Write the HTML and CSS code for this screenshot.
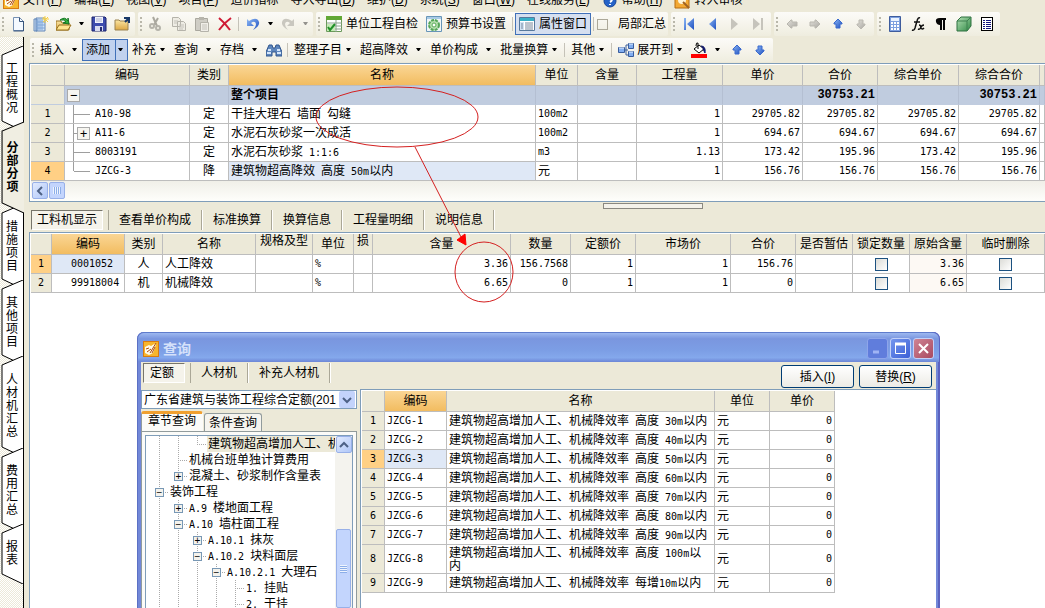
FILE: index.html
```html
<!DOCTYPE html>
<html lang="zh-CN">
<head>
<meta charset="utf-8">
<title>工程计价</title>
<link rel="stylesheet" href="styles.css">
</head>
<body>
<svg class="defs" aria-hidden="true">
  <defs>
    <linearGradient id="blue" x1="0" y1="0" x2="1" y2="1"><stop offset="0" stop-color="#8db8f5"/><stop offset="1" stop-color="#1e50c0"/></linearGradient>
    <linearGradient id="gray" x1="0" y1="0" x2="1" y2="1"><stop offset="0" stop-color="#e2e0da"/><stop offset="1" stop-color="#aaa8a2"/></linearGradient>
    <linearGradient id="green" x1="0" y1="0" x2="1" y2="1"><stop offset="0" stop-color="#b5e0b5"/><stop offset="1" stop-color="#2f8a45"/></linearGradient>
    <linearGradient id="gold" x1="0" y1="0" x2="0" y2="1"><stop offset="0" stop-color="#fbe6a4"/><stop offset="1" stop-color="#dca744"/></linearGradient>
  </defs>
  <symbol id="logo" viewBox="0 0 16 16"><rect width="16" height="16" fill="#d77b12"/><rect x="1" y="1" width="14" height="14" fill="#f7b52c"/><path d="M2 6l4-2 2 1 5-3-1 5-2 5-4 2-4-2z" fill="#fffbe8"/><path d="M3 8l3-1M4 11l4-3M7 12l6-10M9 12l3-6" stroke="#b04a08" fill="none"/></symbol>
  <symbol id="new" viewBox="0 0 16 16"><path d="M3.500 1.500h6l4 4v9h-10z" fill="#f4f9ff" stroke="#7590b4"/><path d="M9.500 1.500v4h4M13.500 5v10h-10" fill="none" stroke="#38557c"/></symbol>
  <symbol id="book" viewBox="0 0 16 16"><path d="M1 3h3v12H1zM3 2h9v13H3z" fill="#cfe2f8" stroke="#6588b8"/><path d="M5 3v11M7 3v11M9 3v11M3 6h9M3 9h9M3 12h9" stroke="#7ea6d8"/><path d="M12 0v7M9 3h7M10 1l5 5M15 1l-5 5" stroke="#f8d040"/></symbol>
  <symbol id="open" viewBox="0 0 16 16"><path d="M0 14V5h5l1 2h7v7z" fill="url(#gold)" stroke="#98711f"/><path d="M0 14l3-5h12l-3 5z" fill="#ffe58e" stroke="#98711f"/><path d="M4 4q5-4 8 1V2l1 6-6-1 3-1q-2-3-6-2" fill="#2fae39" stroke="#147522"/></symbol>
  <symbol id="save" viewBox="0 0 16 16"><path d="M1 1h13l1 1v13H1z" fill="#3d4cad" stroke="#1b236c"/><path d="M4 1h8v6H4z" fill="#f1f3fb"/><path d="M5 3h6M5 5h6" stroke="#aab0d0"/><path d="M4 10h8v5H4z" fill="#d8dcf0"/><path d="M9 11h2v4H9z" fill="#242b70"/></symbol>
  <symbol id="folder" viewBox="0 0 16 16"><path d="M1 14V4h4l1 1h8v9z" fill="url(#gold)" stroke="#9a8250"/><path d="M10 2h5v5M15 2l-4 4" stroke="#183868" stroke-width="2" fill="none"/></symbol>
  <symbol id="cut" viewBox="0 0 16 16"><path d="M5 1l4 9M10 2L6 9" stroke="#aaa89f" stroke-width="2"/><g fill="none" stroke="#b5b3aa" stroke-width="2"><circle cx="4" cy="10" r="2"/><circle cx="10" cy="12" r="2"/></g></symbol>
  <symbol id="copy" viewBox="0 0 16 16"><path d="M1.500 1.500h6l2 2v7h-8zM6.500 5.500h6l2 2v7h-8z" fill="#eeece4" stroke="#b5b3aa"/><path d="M3 5h4M3 7h3M8 9h5M8 11h5M8 13h4" stroke="#c4c2ba"/></symbol>
  <symbol id="paste" viewBox="0 0 16 16"><path d="M1.500 2.500h12v12h-12z" fill="#cfcdc5" stroke="#aaa89f"/><path d="M5 1h5v3H5z" fill="#b7b5ac"/><path d="M6.500 6.500h8v9h-8z" fill="#f0eee8" stroke="#b5b3aa"/><path d="M8 9h5M8 11h5M8 13h5" stroke="#c4c2ba"/></symbol>
  <symbol id="del" viewBox="0 0 16 16"><path d="M2 2q6 5 11 12M14 2Q7 7 2 14" stroke="#cf1b35" stroke-width="2" fill="none"/></symbol>
  <symbol id="undo" viewBox="0 0 16 16"><path d="M2 3v7h7L6 7q4-3 5 1 0 3-3 6 7-4 6-8-2-6-10-1z" fill="url(#blue)"/></symbol>
  <symbol id="redo" viewBox="0 0 16 16"><path d="M14 3v7H7l3-3q-4-3-5 1 0 3 3 6-7-4-6-8 2-6 10-1z" fill="#c9c7bf"/></symbol>
  <symbol id="check" viewBox="0 0 16 16"><path d="M.5.5h15v15H.5z" fill="#fff" stroke="#6c9a5c"/><path d="M0 0h16v4H0z" fill="#62a836"/><path d="M1 7h15M1 10h15M1 13h15M10 4v12" stroke="#8aa08a"/><path d="M1 8h8v7H1z" fill="#c5eab6"/><path d="M2 11l2 3 5-6" stroke="#23902a" stroke-width="2" fill="none"/></symbol>
  <symbol id="gear" viewBox="0 0 16 16"><path d="M.5.5h15v15H.5z" fill="#f0f6f8" stroke="#6795b8"/><path d="M1 1h14v2H1z" fill="#a9cbe6"/><circle cx="8" cy="9" r="5" fill="#b5dfac" stroke="#54a557" stroke-width="2" stroke-dasharray="3 1"/><circle cx="8" cy="9" r="2" fill="#fff" stroke="#58aa58"/></symbol>
  <symbol id="props" viewBox="0 0 16 16"><path d="M.5 1.500h15v13H.5z" fill="#fff" stroke="#58799c"/><path d="M1 2h14v3H1z" fill="#38b0c8"/><path d="M1 6h4v8H1z" fill="#d0e2f4"/><path d="M2 8h2M2 10h2M2 12h2M6 7h8M6 9h8M6 11h8M6 13h8" stroke="#77889c"/></symbol>
  <symbol id="first" viewBox="0 0 16 16"><path d="M3 2h2v12H3zM13 2v12L6 8z" fill="url(#blue)"/></symbol>
  <symbol id="prev" viewBox="0 0 16 16"><path d="M12 2v12L5 8z" fill="url(#blue)"/></symbol>
  <symbol id="next" viewBox="0 0 16 16"><path d="M4 2v12l7-6z" fill="#c6c4bc"/></symbol>
  <symbol id="last" viewBox="0 0 16 16"><path d="M11 2h2v12h-2zM3 2v12l7-6z" fill="#c6c4bc"/></symbol>
  <symbol id="up" viewBox="0 0 16 16"><path d="M8 3l4 4v1h-2v4H6V8H4V7z" fill="url(#blue)" stroke="#3969cd"/></symbol>
  <symbol id="down" viewBox="0 0 16 16"><path d="M8 13l4-4V8h-2V4H6v4H4v1z" fill="url(#blue)" stroke="#3969cd"/></symbol>
  <symbol id="gdown" viewBox="0 0 16 16"><path d="M8 13l4-4V8h-2V4H6v4H4v1z" fill="url(#gray)" stroke="#bbb9b1"/></symbol>
  <symbol id="gleft" viewBox="0 0 16 16"><path d="M3 8l4-4h1v2h5v4H8v2H7z" fill="url(#gray)" stroke="#b9b7af"/></symbol>
  <symbol id="gright" viewBox="0 0 16 16"><path d="M13 8L9 4H8v2H3v4h5v2h1z" fill="url(#gray)" stroke="#b9b7af"/></symbol>
  <symbol id="calc" viewBox="0 0 16 16"><path d="M2.500.5h11v15h-11z" fill="#7ea0df" stroke="#3e5c9d"/><path d="M4 2h8v3H4z" fill="#eaf3ff"/><path d="M4 7h8M4 10h8M4 13h8" stroke="#fff" stroke-width="2" stroke-dasharray="2 1"/></symbol>
  <symbol id="fx" viewBox="0 0 16 16"><path d="M10 2Q8 1 7 5L5 12q-1 3-3 2M4 6h6M9 9q2 0 2 3 1 2 3 0M14 9q-2 0-3 2-1 3-3 2" stroke="#111" stroke-width="1.500" fill="none"/></symbol>
  <symbol id="para" viewBox="0 0 16 16"><path d="M13 2H7Q2 2 3 6q1 3 4 3v5h2V4h1v10h2V4h1z" fill="#050505"/></symbol>
  <symbol id="cube" viewBox="0 0 16 16"><path d="M1 5l4-4h10v9l-4 5H1z" fill="url(#green)" stroke="#2e7040"/><path d="M1 5h10v10M11 5l4-4" stroke="#3e8050" fill="none"/></symbol>
  <symbol id="list" viewBox="0 0 16 16" shape-rendering="crispEdges"><path d="M2 1h12v14H2z"/><path d="M3 2h10v12H3z" fill="#fff"/><path d="M4 4.500h2M4 6.500h2M4 8.500h2M4 10.500h2M4 12.500h2M7 4.500h5M7 6.500h5M7 8.500h5M7 10.500h5M7 12.500h5" stroke="#151580"/></symbol>
  <symbol id="find" viewBox="0 0 16 16"><path d="M3 3h3l1 3h2l1-3h3l3 7v4h-6v-4H6v4H0v-4z" fill="#5e86bc" stroke="#31578e"/><path d="M2 8h3M11 8h3M1 11h4M11 11h4" stroke="#d3e5fa" stroke-width="2"/></symbol>
  <symbol id="expand" viewBox="0 0 16 16"><path d="M6 8h4M8 3v10M8 3h3M8 13h3" stroke="#3a5e9c" fill="none"/><g fill="#82aef0" stroke="#385d9e"><path d="M.5 5.500h6v5h-6zM10.500 1.500h5v5h-5zM10.500 9.500h5v5h-5z"/></g><path d="M1 6h5M11 2h4M11 10h4" stroke="#e8f3ff"/></symbol>
  <symbol id="paint" viewBox="0 0 16 16"><path d="M0 12h16v4H0z" fill="#f00"/><path d="M3 7l5-4 5 4-5 4z" fill="#fff" stroke="#000"/><path d="M7 7V1q-2-1-2 3" fill="none" stroke="#000"/><path d="M10 4q5 0 4 7l-2-4" fill="#10186a" stroke="#10186a"/></symbol>
  <symbol id="help" viewBox="0 0 16 16"><circle cx="8" cy="8" r="6" fill="#2462c8" stroke="#174596"/><path d="M6 6q2-3 4 0 0 2-2 3M8 11v1" stroke="#fff" stroke-width="2" fill="none"/></symbol>
  <symbol id="audit" viewBox="0 0 16 16"><path d="M1 1h14v14H1z" fill="#f3a934" stroke="#b66c10"/><circle cx="8" cy="7" r="4" fill="#fff5d8"/><path d="M9 9l6 6" stroke="#a06220" stroke-width="2"/></symbol>
  <symbol id="caret" viewBox="0 0 7 4"><path d="M1 0h5L4 3H3z" fill="#000"/></symbol>
  <symbol id="chev" viewBox="0 0 10 8"><path d="M1 2l4 4 4-4" fill="none" stroke="#4d6185" stroke-width="2"/></symbol>
  <symbol id="mid" viewBox="0 0 28 19" shape-rendering="crispEdges"><path d="M8.500 0v19M8.500 9.500h17" stroke="#999" fill="none"/></symbol>
  <symbol id="end" viewBox="0 0 28 19" shape-rendering="crispEdges"><path d="M8.500 0v9.500h17" stroke="#999" fill="none"/></symbol>
</svg>

<nav class="menu" aria-label="主菜单">
  <svg class="ic"><use href="#logo"/></svg>
  <a href="#">文件(<u>F</u>)</a><a href="#">编辑(<u>E</u>)</a><a href="#">视图(<u>V</u>)</a><a href="#">项目(<u>P</u>)</a><a href="#">造价指标</a><a href="#">导入导出(<u>D</u>)</a><a href="#">维护(<u>D</u>)</a><a href="#">系统(<u>S</u>)</a><a href="#">窗口(<u>W</u>)</a><a href="#">在线服务(<u>L</u>)</a>
  <svg class="ic"><use href="#help"/></svg><a href="#">帮助(<u>H</u>)</a>
  <svg class="ic"><use href="#audit"/></svg><a href="#">转入审核</a>
</nav>

<div class="bars">
  <div class="bar" role="toolbar"><i class="grip"></i>
    <button class="b" aria-label="新建"><svg class="ic"><use href="#new"/></svg></button>
    <button class="b" aria-label="新建向导"><svg class="ic"><use href="#book"/></svg></button>
    <button class="b" aria-label="打开"><svg class="ic"><use href="#open"/></svg></button>
    <button class="c" aria-label="最近文件"><svg class="ca"><use href="#caret"/></svg></button>
    <button class="b" aria-label="保存"><svg class="ic"><use href="#save"/></svg></button>
    <button class="b" aria-label="另存为"><svg class="ic"><use href="#folder"/></svg></button>
  </div>
  <div class="bar" role="toolbar"><i class="grip"></i>
    <button class="b" aria-label="剪切"><svg class="ic"><use href="#cut"/></svg></button>
    <button class="b" aria-label="复制"><svg class="ic"><use href="#copy"/></svg></button>
    <button class="b" aria-label="粘贴"><svg class="ic"><use href="#paste"/></svg></button>
    <button class="b" aria-label="删除"><svg class="ic"><use href="#del"/></svg></button><i class="sep"></i>
    <button class="b" aria-label="撤销"><svg class="ic"><use href="#undo"/></svg></button>
    <button class="c" aria-label="撤销列表"><svg class="ca"><use href="#caret"/></svg></button>
    <button class="b" aria-label="恢复"><svg class="ic"><use href="#redo"/></svg></button>
    <button class="c off" aria-label="恢复列表"><svg class="ca"><use href="#caret"/></svg></button>
  </div>
  <div class="bar" role="toolbar"><i class="grip"></i>
    <button class="t"><svg class="ic"><use href="#check"/></svg>单位工程自检</button>
    <button class="t"><svg class="ic"><use href="#gear"/></svg>预算书设置</button><i class="sep"></i>
    <button class="t on"><svg class="ic"><use href="#props"/></svg>属性窗口</button><i class="sep"></i>
    <label class="t last"><input class="flat" type="checkbox">局部汇总</label>
  </div>
  <div class="bar" role="toolbar"><i class="grip"></i>
    <button class="b" aria-label="首行"><svg class="ic"><use href="#first"/></svg></button>
    <button class="b" aria-label="上一行"><svg class="ic"><use href="#prev"/></svg></button>
    <button class="b" aria-label="下一行"><svg class="ic"><use href="#next"/></svg></button>
    <button class="b" aria-label="末行"><svg class="ic"><use href="#last"/></svg></button>
  </div>
  <div class="bar" role="toolbar"><i class="grip"></i>
    <button class="b" aria-label="升级"><svg class="ic"><use href="#gleft"/></svg></button>
    <button class="b" aria-label="降级"><svg class="ic"><use href="#gright"/></svg></button>
    <button class="b" aria-label="上移"><svg class="ic"><use href="#up"/></svg></button>
    <button class="b" aria-label="下移"><svg class="ic"><use href="#gdown"/></svg></button>
  </div>
  <div class="bar" role="toolbar"><i class="grip"></i>
    <button class="b" aria-label="计算器"><svg class="ic"><use href="#calc"/></svg></button>
    <button class="b" aria-label="函数"><svg class="ic"><use href="#fx"/></svg></button>
    <button class="b" aria-label="特殊符号"><svg class="ic"><use href="#para"/></svg></button>
    <button class="b" aria-label="图元"><svg class="ic"><use href="#cube"/></svg></button>
    <button class="b" aria-label="清单"><svg class="ic"><use href="#list"/></svg></button>
  </div>
</div>

<div class="work">
  <nav class="side" aria-label="页签">
    <button class="s4"><svg viewBox="0 0 22 85" preserveAspectRatio="none"><path d="M22 0L1 9v66l21 10"/></svg><span>工程概况</span></button>
    <button class="s4b cur"><svg viewBox="0 0 22 91" preserveAspectRatio="none"><path d="M22 0L1 9v72l21 10"/></svg><span>分部分项</span></button>
    <button class="s4"><svg viewBox="0 0 22 85" preserveAspectRatio="none"><path d="M22 0L1 9v66l21 10"/></svg><span>措施项目</span></button>
    <button class="s4"><svg viewBox="0 0 22 85" preserveAspectRatio="none"><path d="M22 0L1 9v66l21 10"/></svg><span>其他项目</span></button>
    <button class="s5"><svg viewBox="0 0 22 101" preserveAspectRatio="none"><path d="M22 0L1 9v82l21 10"/></svg><span>人材机汇总</span></button>
    <button class="s4"><svg viewBox="0 0 22 85" preserveAspectRatio="none"><path d="M22 0L1 9v66l21 10"/></svg><span>费用汇总</span></button>
    <button class="s2"><svg viewBox="0 0 22 60" preserveAspectRatio="none"><path d="M22 0L1 9v41l21 10"/></svg><span>报表</span></button>
  </nav>

  <main>
    <div class="bars second">
      <div class="bar" role="toolbar"><i class="grip"></i>
        <button class="t wide">插入<svg class="ca"><use href="#caret"/></svg></button>
        <button class="t on split">添加<svg class="ca"><use href="#caret"/></svg></button>
        <button class="t">补充<svg class="ca"><use href="#caret"/></svg></button>
        <button class="t wide">查询<svg class="ca"><use href="#caret"/></svg></button>
        <button class="t wide">存档<svg class="ca"><use href="#caret"/></svg></button>
        <button class="b" aria-label="查找"><svg class="ic"><use href="#find"/></svg></button><i class="sep"></i>
        <button class="t">整理子目<svg class="ca"><use href="#caret"/></svg></button>
        <button class="t wide">超高降效<svg class="ca"><use href="#caret"/></svg></button>
        <button class="t wide">单价构成<svg class="ca"><use href="#caret"/></svg></button>
        <button class="t">批量换算<svg class="ca"><use href="#caret"/></svg></button><i class="sep"></i>
        <button class="t">其他<svg class="ca"><use href="#caret"/></svg></button><i class="sep"></i>
        <button class="t"><svg class="ic"><use href="#expand"/></svg>展开到<svg class="ca"><use href="#caret"/></svg></button>
        <button class="t wide" aria-label="填充颜色"><svg class="ic"><use href="#paint"/></svg><svg class="ca"><use href="#caret"/></svg></button>
        <button class="b" aria-label="上移"><svg class="ic"><use href="#up"/></svg></button>
        <button class="b" aria-label="下移"><svg class="ic"><use href="#down"/></svg></button>
      </div>
    </div>

    <section class="pane">
      <table class="grid g1">
        <colgroup><col class="w34"><col class="w125"><col class="w39"><col class="w307"><col class="w42"><col class="w59"><col class="w86"><col class="w80"><col class="w75"><col class="w81"><col class="w81"><col></colgroup>
        <thead><tr><th></th><th>编码</th><th>类别</th><th class="hot">名称</th><th>单位</th><th>含量</th><th>工程量</th><th>单价</th><th>合价</th><th>综合单价</th><th>综合合价</th><th></th></tr></thead>
        <tbody>
          <tr class="sum"><td class="no"></td><td class="code"><button class="box lead" aria-label="折叠">−</button></td><td></td><td><b>整个项目</b></td><td></td><td></td><td></td><td></td><td class="n">30753.21</td><td></td><td class="n">30753.21</td><td></td></tr>
          <tr><td class="no">1</td><td class="code"><svg class="tr"><use href="#mid"/></svg>A10-98</td><td class="m">定</td><td>干挂大理石<span class="l"> </span>墙面<span class="l"> </span>勾缝</td><td class="l">100m2</td><td></td><td class="n">1</td><td class="n">29705.82</td><td class="n">29705.82</td><td class="n">29705.82</td><td class="n">29705.82</td><td></td></tr>
          <tr><td class="no">2</td><td class="code"><svg class="tr"><use href="#mid"/></svg><button class="box inner" aria-label="展开">+</button>A11-6</td><td class="m">定</td><td>水泥石灰砂浆一次成活</td><td class="l">100m2</td><td></td><td class="n">1</td><td class="n">694.67</td><td class="n">694.67</td><td class="n">694.67</td><td class="n">694.67</td><td></td></tr>
          <tr><td class="no">3</td><td class="code"><svg class="tr"><use href="#mid"/></svg>8003191</td><td class="m">定</td><td>水泥石灰砂浆<span class="l"> 1:1:6</span></td><td class="l">m3</td><td></td><td class="n">1.13</td><td class="n">173.42</td><td class="n">195.96</td><td class="n">173.42</td><td class="n">195.96</td><td></td></tr>
          <tr><td class="no cur">4</td><td class="code"><svg class="tr"><use href="#end"/></svg>JZCG-3</td><td class="m">降</td><td class="sel">建筑物超高降效<span class="l"> </span>高度<span class="l"> 50m</span>以内</td><td>元</td><td></td><td class="n">1</td><td class="n">156.76</td><td class="n">156.76</td><td class="n">156.76</td><td class="n">156.76</td><td></td></tr>
        </tbody>
      </table>
      <div class="hscroll"><button class="sb" aria-label="向左滚动"><svg class="chev left"><use href="#chev"/></svg></button><i class="thumb"></i></div>
    </section>

    <div class="mid">
      <i class="splitter"></i>
      <div class="tabs">
        <button class="press">工料机显示</button><button>查看单价构成</button><button>标准换算</button><button>换算信息</button><button>工程量明细</button><button>说明信息</button>
      </div>
    </div>

    <section class="pane fill">
      <table class="grid g2">
        <colgroup><col class="w21"><col class="w73"><col class="w38"><col class="w93"><col class="w57"><col class="w41"><col class="w19"><col class="w138"><col class="w60"><col class="w65"><col class="w95"><col class="w65"><col class="w57"><col class="w57"><col class="w57"><col></colgroup>
        <thead><tr><th></th><th class="hot">编码</th><th>类别</th><th>名称</th><th class="hi">规格及型</th><th>单位</th><th class="hi">损</th><th>含量</th><th>数量</th><th>定额价</th><th>市场价</th><th>合价</th><th>是否暂估</th><th>锁定数量</th><th>原始含量</th><th>临时删除</th></tr></thead>
        <tbody>
          <tr><td class="no cur">1</td><td class="l ind sel">0001052</td><td class="m">人</td><td>人工降效</td><td></td><td class="l">%</td><td></td><td class="n">3.36</td><td class="n">156.7568</td><td class="n">1</td><td class="n">1</td><td class="n">156.76</td><td></td><td class="m"><input type="checkbox" aria-label="锁定数量 1"></td><td class="n warm">3.36</td><td class="m"><input type="checkbox" aria-label="临时删除 1"></td></tr>
          <tr><td class="no">2</td><td class="l ind">99918004</td><td class="m">机</td><td>机械降效</td><td></td><td class="l">%</td><td></td><td class="n">6.65</td><td class="n">0</td><td class="n">1</td><td class="n">1</td><td class="n">0</td><td></td><td class="m"><input type="checkbox" aria-label="锁定数量 2"></td><td class="n warm">6.65</td><td class="m"><input type="checkbox" aria-label="临时删除 2"></td></tr>
        </tbody>
      </table>
    </section>
  </main>
</div>

<section class="dialog" role="dialog" aria-labelledby="dt">
  <header class="title"><svg class="ic"><use href="#logo"/></svg><h1 id="dt">查询</h1>
    <button class="wb dim" aria-label="最小化"><svg viewBox="0 0 19 19"><path d="M5 13h6" stroke="#a0b4f4" stroke-width="3"/></svg></button>
    <button class="wb" aria-label="最大化"><svg viewBox="0 0 19 19"><path d="M4.500 5v9.500h10V5M4 5h11" stroke="#fff" stroke-width="1" fill="none"/><path d="M4 5h11" stroke="#fff" stroke-width="3"/></svg></button>
    <button class="wb red" aria-label="关闭"><svg viewBox="0 0 19 19"><path d="M5 5l9 9M14 5l-9 9" stroke="#fff" stroke-width="2"/></svg></button>
  </header>
  <div class="body">
    <div class="dtop">
      <div class="tabs"><button class="press">定额</button><button>人材机</button><button>补充人材机</button></div>
      <div class="acts"><button>插入(<u>I</u>)</button><button>替换(<u>R</u>)</button></div>
    </div>
    <div class="split2">
      <div class="left">
        <div class="combo"><select aria-label="定额库"><option>广东省建筑与装饰工程综合定额(201</option></select><i><svg class="chev"><use href="#chev"/></svg></i></div>
        <div class="pages"><button class="cur">章节查询</button><button>条件查询</button></div>
        <div class="frame">
          <div class="treebox">
            <ul class="tree">
              <li><i class="g"></i><i class="g"></i><i class="g e"></i><a class="pick" href="#">建筑物超高增加人工、机械</a></li>
              <li><i class="g"></i><i class="g k"></i><a href="#">机械台班单独计算费用</a></li>
              <li><i class="g"></i><i class="g e"><button aria-label="展开">+</button></i><a href="#">混凝土、砂浆制作含量表</a></li>
              <li><i class="g k"><button aria-label="折叠">−</button></i><a href="#">装饰工程</a></li>
              <li><i class="g"></i><i class="g k"><button aria-label="展开">+</button></i><a href="#"><span class="l">A.9 </span>楼地面工程</a></li>
              <li><i class="g"></i><i class="g k"><button aria-label="折叠">−</button></i><a href="#"><span class="l">A.10 </span>墙柱面工程</a></li>
              <li><i class="g"></i><i class="g"></i><i class="g k"><button aria-label="展开">+</button></i><a href="#"><span class="l">A.10.1 </span>抹灰</a></li>
              <li><i class="g"></i><i class="g"></i><i class="g k"><button aria-label="折叠">−</button></i><a href="#"><span class="l">A.10.2 </span>块料面层</a></li>
              <li><i class="g"></i><i class="g"></i><i class="g"></i><i class="g k"><button aria-label="折叠">−</button></i><a href="#"><span class="l">A.10.2.1 </span>大理石</a></li>
              <li><i class="g"></i><i class="g"></i><i class="g"></i><i class="g"></i><i class="g k"></i><a href="#"><span class="l">1. </span>挂贴</a></li>
              <li><i class="g"></i><i class="g"></i><i class="g"></i><i class="g"></i><i class="g k"></i><a href="#"><span class="l">2. </span>干挂</a></li>
            </ul>
            <div class="vscroll"><button class="sb" aria-label="向上滚动"><svg class="chev flip"><use href="#chev"/></svg></button><i class="vthumb"></i></div>
          </div>
        </div>
      </div>
      <div class="right">
        <table class="grid g3">
          <colgroup><col class="w23"><col class="w62"><col class="w268"><col class="w55"><col class="w65"></colgroup>
          <thead><tr><th></th><th class="hot">编码</th><th>名称</th><th>单位</th><th>单价</th></tr></thead>
          <tbody>
            <tr><td class="no">1</td><td class="l">JZCG-1</td><td>建筑物超高增加人工、机械降效率<span class="l"> </span>高度<span class="l"> 30m</span>以内</td><td>元</td><td class="n">0</td></tr>
            <tr><td class="no">2</td><td class="l">JZCG-2</td><td>建筑物超高增加人工、机械降效率<span class="l"> </span>高度<span class="l"> 40m</span>以内</td><td>元</td><td class="n">0</td></tr>
            <tr><td class="no cur">3</td><td class="l sel">JZCG-3</td><td>建筑物超高增加人工、机械降效率<span class="l"> </span>高度<span class="l"> 50m</span>以内</td><td>元</td><td class="n">0</td></tr>
            <tr><td class="no">4</td><td class="l">JZCG-4</td><td>建筑物超高增加人工、机械降效率<span class="l"> </span>高度<span class="l"> 60m</span>以内</td><td>元</td><td class="n">0</td></tr>
            <tr><td class="no">5</td><td class="l">JZCG-5</td><td>建筑物超高增加人工、机械降效率<span class="l"> </span>高度<span class="l"> 70m</span>以内</td><td>元</td><td class="n">0</td></tr>
            <tr><td class="no">6</td><td class="l">JZCG-6</td><td>建筑物超高增加人工、机械降效率<span class="l"> </span>高度<span class="l"> 80m</span>以内</td><td>元</td><td class="n">0</td></tr>
            <tr><td class="no">7</td><td class="l">JZCG-7</td><td>建筑物超高增加人工、机械降效率<span class="l"> </span>高度<span class="l"> 90m</span>以内</td><td>元</td><td class="n">0</td></tr>
            <tr class="tall"><td class="no">8</td><td class="l">JZCG-8</td><td>建筑物超高增加人工、机械降效率<span class="l"> </span>高度<span class="l"> 100m</span>以<br>内</td><td>元</td><td class="n">0</td></tr>
            <tr><td class="no">9</td><td class="l">JZCG-9</td><td>建筑物超高增加人工、机械降效率<span class="l"> </span>每增<span class="l">10m</span>以内</td><td>元</td><td class="n">0</td></tr>
          </tbody>
        </table>
      </div>
    </div>
  </div>
</section>

<svg class="marks" width="1045" height="608" aria-hidden="true">
  <g fill="none" stroke="#d42020"><ellipse cx="397" cy="117" rx="81" ry="30"/><path d="M415 147l46 90"/><ellipse cx="484" cy="272" rx="29" ry="30"/></g>
  <path d="M466 245l-9-5 8-6z" fill="#f00" stroke="#f00"/>
</svg>
</body>
</html>
```
FILE: styles.css
```css
* { box-sizing: border-box; }
body {
  margin: 0; height: 100vh; overflow: hidden; position: relative;
  display: flex; flex-direction: column; background: #ece9d8; color: #000;
  font: 12px/18px "Liberation Sans", "Noto Sans CJK SC", sans-serif;
}
button, select, input { font: inherit; color: inherit; margin: 0; padding: 0; }
button { border: 0; background: none; white-space: nowrap; }
a { color: inherit; text-decoration: none; }
i { font-style: normal; }
svg { display: block; flex: none; }
.defs { position: absolute; width: 0; height: 0; }
.ic { width: 16px; height: 16px; }
.ca { width: 7px; height: 4px; }
.l { font-family: "DejaVu Sans Mono", monospace; font-size: 10px; white-space: pre; }

.menu { height: 11px; flex: none; display: flex; align-items: flex-end; overflow: hidden; padding: 0 3px 2px; gap: 4px; white-space: nowrap; }
.menu a { padding-right: 8px; }

.bars { height: 26px; flex: none; display: flex; gap: 3px; padding: 1px 0; overflow: hidden; }
.bar { display: flex; align-items: center; height: 24px; padding: 0 2px; background: linear-gradient(#fcfbf8, #efeddf); border-radius: 2px; flex: none; }
.grip { width: 2px; height: 14px; margin-right: 2px; background: repeating-linear-gradient(#b9b7aa 0 2px, transparent 2px 4px); }
.b { width: 23px; height: 22px; display: flex; align-items: center; justify-content: center; }
.c { width: 12px; height: 22px; display: flex; align-items: center; justify-content: center; }
.off { opacity: .4; }
.sep { width: 1px; height: 14px; margin: 0 2px; background: #c5c2b8; }
.t { display: flex; align-items: center; gap: 4px; height: 22px; padding: 0 4px; }
.t.last { padding-right: 0; }
.on { background: #d5dff0; border: 1px solid #4070b8; padding: 0 3px; }
.second .t { gap: 3px; }
.second .t.wide, .second .split { gap: 7px; }
.split { background: linear-gradient(90deg, #c1d2ee 32px, #4070b8 32px 33px, #c1d2ee 33px); }
input[type=checkbox] { appearance: none; width: 13px; height: 13px; border: 1px solid #1c5180; background: linear-gradient(135deg, #dcdcd7, #fff); display: block; margin: 0 auto; }
input.flat[type=checkbox] { width: 11px; height: 11px; border-color: #aca899; background: none; margin: 0 6px 0 -3px; }

.work { flex: 1; min-height: 0; display: flex; }
.side { width: 24px; flex: none; border-right: 1px solid #000; padding: 9px 0 0 1px; background: repeating-conic-gradient(#fff 0 25%, #ece9d8 0 50%) 0 0 / 2px 2px; display: flex; flex-direction: column; }
.side button { position: relative; width: 22px; display: grid; place-items: center; margin-bottom: -9px; flex: none; }
.side svg { grid-area: 1 / 1; width: 22px; height: 100%; fill: #fff; stroke: #000; }
.side span { grid-area: 1 / 1; z-index: 1; width: 14px; white-space: normal; line-height: 13px; word-break: break-all; }
.s4 { height: 85px; }
.s4b { height: 91px; }
.s5 { height: 101px; }
.s2 { height: 60px; }
.side .cur { z-index: 2; width: 23px; font-weight: bold; }
.side .cur svg { width: 23px; fill: #f0eee2; }
main { flex: 1; min-width: 0; display: flex; flex-direction: column; padding-left: 5px; }
.second { padding-left: 1px; }

.pane { border: 1px solid #7f9db9; border-right: 0; background: #fff; padding: 1px 0 0 1px; overflow: hidden; flex: none; }
.pane.fill { flex: 1; border-bottom: 0; }
.grid { border-collapse: separate; border-spacing: 0; table-layout: fixed; width: 100%; }
.grid th { height: 21px; padding: 0; font-weight: normal; line-height: 18px; background: #ece9d8; border: solid #bdbdbd; border-width: 0 1px 1px 0; white-space: nowrap; overflow: hidden; }
.grid th.hot { background: linear-gradient(#fad695, #f2bc60); }
.grid th.hi { vertical-align: top; line-height: 15px; }
.grid td { height: 19px; padding: 0 2px; line-height: 16px; border: solid #bdbdbd; border-width: 0 1px 1px 0; white-space: nowrap; overflow: hidden; }
.grid .no, .grid .n, .grid .code { font-family: "DejaVu Sans Mono", monospace; font-size: 10px; }
.grid .no { background: #ece9d8; text-align: center; }
.grid .no.cur { background: #ffd085; }
.grid .n { text-align: right; }
.grid .m { text-align: center; }
.grid .sel { background: #dfe8f6; }
.grid .warm { background: #fdf9f4; }
.grid .ind { padding-left: 19px; }
.grid .sum td { background: #c0ccdf; border-bottom-color: #c0ccdf; border-right-color: #b4bfd2; }
.grid .sum td.no { background: #ece9d8; }
.grid .sum .n { font-family: "Liberation Mono", monospace; font-size: 12px; font-weight: bold; }
.grid .code { padding: 0; position: relative; line-height: 18px; }
.tr { width: 28px; height: 18px; display: inline-block; vertical-align: top; margin-right: 2px; }
.box { width: 13px; height: 13px; line-height: 10px; border: 1px solid #aaa; background: #f6f5f0; font-size: 12px; display: block; }
.lead { margin-left: 2px; }
.inner { position: absolute; left: 12px; top: 3px; }
.hscroll { display: flex; height: 20px; padding: 1px 0 0 1px; gap: 1px; background: linear-gradient(#f0efe8, #fefefb); }
.sb, .thumb { width: 16px; height: 17px; border: 1px solid #98b0e8; border-radius: 2px; background: linear-gradient(135deg, #e1eafe, #b0c7f8); display: grid; place-items: center; }
.thumb { background: repeating-linear-gradient(90deg, #eef4fe 0 1px, #8caee8 1px 2px) center / 8px 7px no-repeat, #c3d5fd; }
.chev { width: 10px; height: 8px; }
.left.chev { transform: rotate(90deg); }
.flip { transform: rotate(180deg); }

.mid { height: 30px; flex: none; display: flex; flex-direction: column; }
.splitter { width: 100px; height: 6px; margin: 1px auto 0; border: 1px solid #8a8880; background: #f4f2ea radial-gradient(#000 1px, transparent 1px) 0 0 / 82px 4px; flex: none; align-self: center; transform: translateX(116px); }
.tabs { display: flex; align-items: stretch; gap: 1px; padding: 1px 0 0 2px; }
.tabs button { height: 20px; padding: 0 10px; border-right: 1px solid #aaa797; box-shadow: 1px 0 #fff; }
.tabs .press { padding: 0 5px; border: 1px solid; border-color: #77756b #fff #fff #77756b; background: #f5f3eb; margin-right: 5px; box-shadow: 5px 0 #ece9d8, 6px 0 #aaa797; }

.w19 { width: 19px; } .w21 { width: 21px; } .w23 { width: 23px; } .w34 { width: 34px; } .w38 { width: 38px; } .w39 { width: 39px; }
.w41 { width: 41px; } .w42 { width: 42px; } .w55 { width: 55px; } .w57 { width: 57px; } .w59 { width: 59px; } .w60 { width: 60px; }
.w62 { width: 62px; } .w65 { width: 65px; } .w73 { width: 73px; } .w75 { width: 75px; } .w80 { width: 80px; } .w81 { width: 81px; }
.w86 { width: 86px; } .w93 { width: 93px; } .w95 { width: 95px; } .w125 { width: 125px; } .w138 { width: 138px; } .w268 { width: 268px; } .w307 { width: 307px; }

.dialog { position: absolute; left: 137px; top: 332px; bottom: 0; width: 803px; z-index: 3; display: flex; flex-direction: column; border-radius: 7px 7px 0 0; background: #7288d8; padding: 0 4px; box-shadow: inset 1px 0 #5b70c4, inset -2px 0 #5b62c0, inset 0 1px #5f7ccc; overflow: hidden; }
.title { height: 29px; margin: 1px -3px 0; padding: 2px 5px 0; flex: none; display: flex; align-items: center; gap: 2px; background: linear-gradient(#9db8f0, #7a96df 20%, #7c9ee5 60%, #84a8ec 85%, #6c86d6); border-radius: 6px 6px 0 0; }
.title h1 { flex: 1; margin: 0 0 0 2px; font-size: 14px; line-height: 18px; color: #d5e1fa; }
.wb { width: 21px; height: 21px; border: 1px solid #c3d1f8; border-radius: 3px; background: linear-gradient(135deg, #7395ee, #3c60d6); }
.dim { border-color: #8ea5ea; background: #607ddc; }
.red { background: linear-gradient(135deg, #cf8494, #a94a60); }
.body { flex: 1; min-height: 0; background: #ece9d8; display: flex; flex-direction: column; }
.dtop { height: 27px; flex: none; display: flex; justify-content: space-between; }
.dtop .tabs .press { padding: 0 10px 0 6px; }
.acts { display: flex; gap: 5px; padding: 3px 4px 0 0; }
.acts button { width: 73px; height: 23px; border: 1px solid #003c74; border-radius: 3px; background: linear-gradient(#fff, #ecebe5); }
.split2 { flex: 1; min-height: 0; display: flex; gap: 3px; }
.split2 .left { width: 216px; flex: none; display: flex; flex-direction: column; padding-top: 1px; }
.combo { height: 19px; border: 1px solid #7f9db9; background: #fff; display: flex; flex: none; }
.combo select { appearance: none; flex: 1; min-width: 0; border: 0; background: none; padding: 0 0 0 2px; line-height: 16px; overflow: hidden; }
.combo i { width: 16px; background: #c3d3fb; border-radius: 2px; display: grid; place-items: center; margin-right: 1px; }
.pages { display: flex; align-items: flex-end; height: 22px; flex: none; gap: 1px; }
.pages button { height: 18px; padding: 0 4px; border: 1px solid #919b9c; border-bottom: 0; border-radius: 3px 3px 0 0; background: #f5f4ee; line-height: 16px; }
.pages .cur { height: 20px; padding: 0 6px 3px; border-top: 3px solid #f0a030; background: #fbfbf8; border-right-color: #fbfbf8; line-height: 14px; }
.frame { flex: 1; min-height: 0; border: 1px solid #919b9c; border-bottom: 0; background: #fbfbf8; padding: 3px 3px 0; }
.treebox { height: 100%; border: 1px solid #7f9db9; border-bottom: 0; background: #fff; display: flex; overflow: hidden; }
.tree { flex: 1; min-width: 0; overflow: hidden; list-style: none; margin: 0; padding: 0 0 0 4px; }
.tree li { height: 16px; display: flex; white-space: nowrap; }
.tree a { line-height: 16px; padding: 0 1px; }
.tree .pick { background: #ece9d8; flex: 1; overflow: hidden; }
.g { width: 19px; height: 16px; flex: none; position: relative; background: repeating-linear-gradient(#aaa 0 1px, transparent 1px 2px) 9px 0 / 1px 16px no-repeat; }
.k { background: repeating-linear-gradient(#aaa 0 1px, transparent 1px 2px) 9px 0 / 1px 16px no-repeat, repeating-linear-gradient(90deg, #aaa 0 1px, transparent 1px 2px) 9px 8px / 10px 1px no-repeat; }
.e { background: repeating-linear-gradient(#aaa 0 1px, transparent 1px 2px) 9px 0 / 1px 8px no-repeat, repeating-linear-gradient(90deg, #aaa 0 1px, transparent 1px 2px) 9px 8px / 10px 1px no-repeat; }
.g button { display: block; width: 9px; height: 9px; margin: 4px 0 0 5px; border: 1px solid #7898b5; background: #f4f2ec; font-size: 10px; line-height: 6px; }
.vscroll { width: 17px; flex: none; background: #f4f3ee; display: flex; flex-direction: column; justify-content: space-between; padding-left: 1px; }
.vthumb { height: 79px; width: 15px; border: 1px solid #98b0e8; border-radius: 2px; background: repeating-linear-gradient(#eef4fe 0 1px, #8caee8 1px 2px) center / 7px 8px no-repeat, #c3d5fd; }
.right { flex: 1; min-width: 0; border: 1px solid #7f9db9; border-width: 1px 0 0 1px; background: #fff; padding: 1px 0 0 1px; }
.g3 { width: 473px; }
.g3 .tall td { height: 29px; line-height: 12px; }
.marks { position: absolute; left: 0; top: 0; z-index: 4; pointer-events: none; }
```
